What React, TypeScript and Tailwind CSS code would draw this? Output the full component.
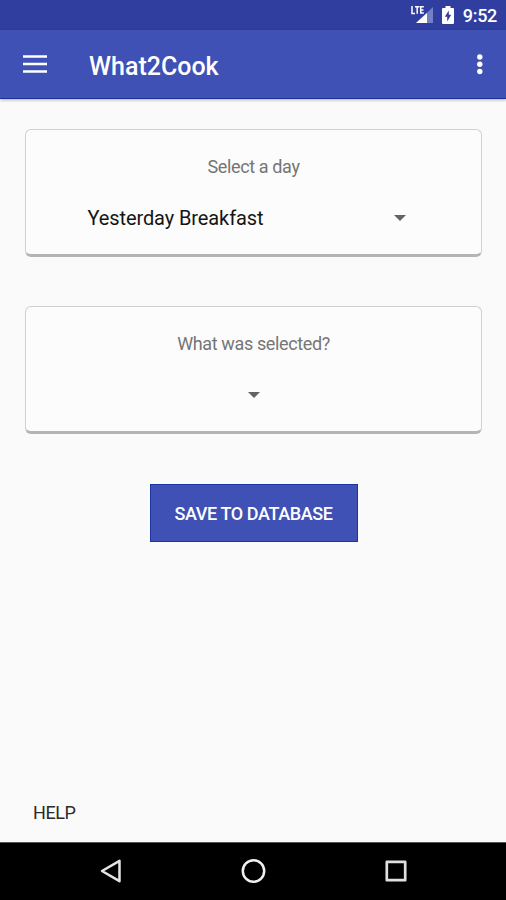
import { useState } from "react";

interface spinnerBox {
    label : string
    value : string
}

const StatusBar = () => {
  return (
    <div className="flex h-[30px] items-center justify-end bg-[#303f9f] pr-[9px] text-white">
      <svg width="22" height="20" viewBox="0 0 22 20" className="mr-[9px]">
        <path d="M22 2v16H5z" fill="#7480c6" />
        <path d="M16 8v10H5z" fill="#fff" />
        <path d="M-1 -1h14.500v10h-14.500z" fill="#303f9f" />
        <path d="M1 1v7.500h3M4 1.700h4.500M6.200 1.700v7M12.800 1.700H9.700v6.300h3.100M9.700 5h2.800" fill="none" stroke="#fff" strokeWidth="1.500" />
      </svg>
      <svg width="12" height="20" viewBox="0 0 12 20" className="mr-[9px]">
        <path d="M3.500 1h5v2H11q1 0 1 1v14q0 1-1 1H1q-1 0-1-1V4q0-1 1-1h2.500z" fill="#fff" />
        <path d="M6.800 5.500v4.200h2.400L5.200 16.500v-4.700H2.800z" fill="#303f9f" />
      </svg>
      <span className="mt-[2px] text-[18px] leading-none font-medium tracking-[-0.3px]">9:52</span>
    </div>
  )
}

const Toolbar = () => {
  return (
    <header className="relative flex h-[69px] items-center border-b border-[#1c3394] bg-[#3f51b5] pr-[23px] pl-[23px] text-white shadow-[0_1px_3px_rgba(0,0,0,0.3)]">
      <button aria-label="Menu">
        <svg width="24" height="18" viewBox="0 0 24 18">
          <path d="M0 1.500h24M0 9h24M0 16.500h24" stroke="#fff" strokeWidth="2.500" />
        </svg>
      </button>
      <h1 className="mt-[4px] ml-[42px] flex-1 text-[25px] leading-none font-medium">What2Cook</h1>
      <button aria-label="More">
        <svg width="6" height="22" viewBox="0 0 6 22">
          <circle cx="2.800" cy="4" r="2.700" fill="#fff" />
          <circle cx="2.800" cy="11.200" r="2.700" fill="#fff" />
          <circle cx="2.800" cy="18.500" r="2.700" fill="#fff" />
        </svg>
      </button>
    </header>
  )
}

const Spinner = ({ label, value } : spinnerBox) => {
  return (
    <section className="h-[128px] rounded-[6px] border border-b-[3px] border-[#d0d0d0] border-b-[#b4b4b4] bg-[#fcfcfc] pt-[25px] text-center">
      <p className="text-[18px] leading-6 tracking-[-0.370px] text-[#757575]">{label}</p>
      <button className={value ? "mx-auto mt-[27px] flex h-6 w-[332px] items-center justify-between pr-[14px]" : "mx-auto mt-[27px] flex h-6 items-center"}>
        {value && <span className="text-[20px] leading-6 tracking-[-0.100px] text-[#151515]">{value}</span>}
        <svg width="12" height="6" viewBox="0 0 12 6">
          <path d="M0 0h12L6 6z" fill="#636363" />
        </svg>
      </button>
    </section>
  )
}

const NavBar = () => {
  return (
    <nav className="flex h-[58px] items-center justify-center gap-[117px] border-t border-[#555] bg-black pb-px">
      <svg width="26" height="26" viewBox="0 0 26 26" fill="none" stroke="#e4e4e4" strokeWidth="2.500" strokeLinejoin="round">
        <path d="M22.500 2.800v20.400L5 13z" />
      </svg>
      <svg width="26" height="26" viewBox="0 0 26 26" fill="none" stroke="#f0f0f0" strokeWidth="2.500">
        <circle cx="13.500" cy="13" r="10.700" />
      </svg>
      <svg width="26" height="26" viewBox="0 0 26 26" fill="none" stroke="#e0e0e0" strokeWidth="2.700" strokeLinejoin="round">
        <path d="M3.800 3.800h18.400v18.400H3.800z" />
      </svg>
    </nav>
  )
}

const App = () => {
  const [day] = useState("Yesterday Breakfast")
  const [meal] = useState("")

  return (
    <div className="flex h-screen flex-col bg-[#fafafa] font-['Roboto',sans-serif]">
      <StatusBar />
      <Toolbar />
      <main className="flex flex-1 flex-col pt-[30px] pr-[24px] pl-[25px]">
        <Spinner label="Select a day" value={day} />
        <div className="h-[49px]" />
        <Spinner label="What was selected?" value={meal} />
        <button className="mt-[50px] h-[58px] w-[208px] self-center border border-[#1c34a5] bg-[#3f51b5] text-[18px] font-medium tracking-[-0.400px] text-white">
          SAVE TO DATABASE
        </button>
        <button className="mt-auto mb-[17px] ml-[8px] self-start text-[18px] leading-6 tracking-[-0.400px] text-[#2a2a2a]">HELP</button>
      </main>
      <NavBar />
    </div>
  )
}

export default App
